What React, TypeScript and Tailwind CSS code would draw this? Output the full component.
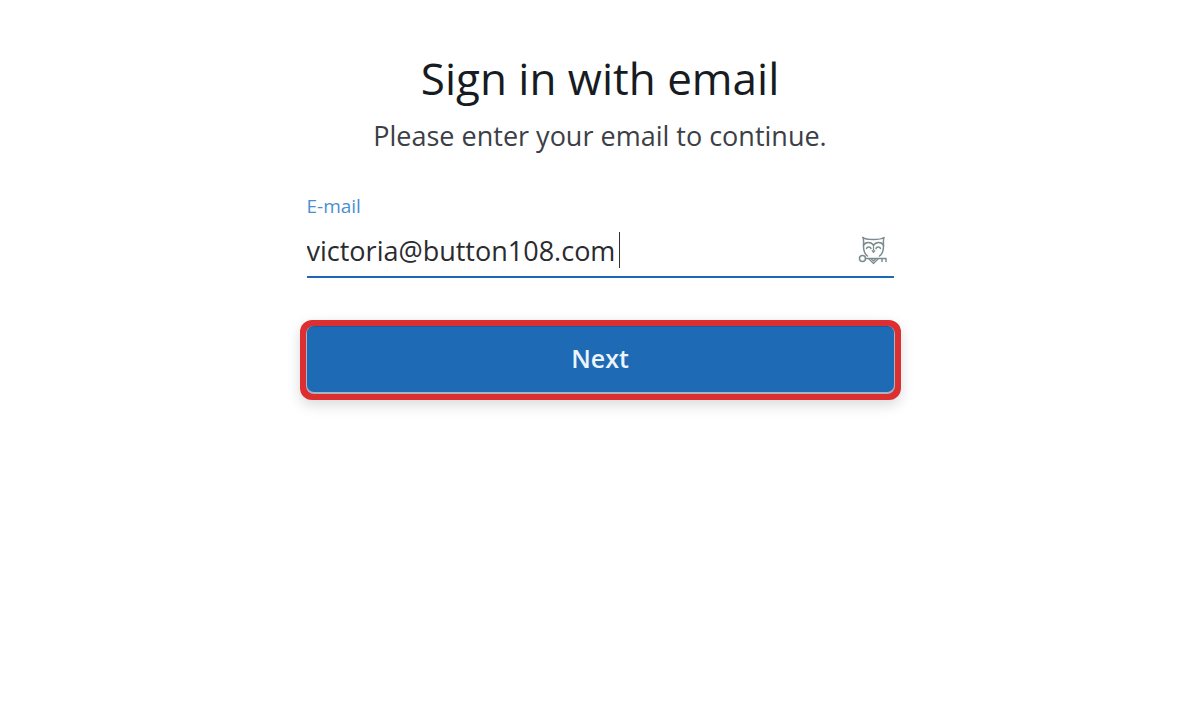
import { useState } from "react";

function OwlKeyIcon() {
  return (
    <svg
      viewBox="0 0 30 30"
      className="size-[30px]"
      fill="none"
      stroke="#7b8b90"
      strokeWidth="1.5"
      strokeLinecap="round"
      strokeLinejoin="round"
      aria-hidden="true"
    >
      <path d="M5 2.500C7 4.500 10 4.500 15.500 4.500C20 4.500 23 4.500 26 2.500C25 5 25.500 7 25.500 11C25.500 16 24.500 19 21.500 21" />
      <path d="M5 2.500C6 5 5.500 7 5.500 11C5.500 16 6.500 19 9.500 21" />
      <path d="M5.500 10.500C7 6.500 13.500 6.500 15.500 10.500C17.500 6.500 24 6.500 25.500 10.500" />
      <path d="M8.500 13.500C9 11.500 12.500 11.500 13 13.500M18 13.500C18.500 11.500 22 11.500 22.500 13.500" />
      <path d="M15.500 10.500V15M14.200 15.500L15.500 17.500L16.800 15.500" strokeWidth="1.200" />
      <circle cx="4.500" cy="23.500" r="3" />
      <path d="M7.500 23.500H28V26.500M24 23.500V26.500" />
      <path d="M11 24L15.500 28.500L20 24M13.500 24L15.500 26L17.500 24" strokeWidth="1.200" />
    </svg>
  );
}

export default function App() {
  const [email, setEmail] = useState("victoria@button108.com");

  return (
    <main className="min-h-screen bg-white px-4 pt-14 font-['Open_Sans',sans-serif]">
      <form className="mx-auto w-full max-w-[601px]" onSubmit={(e) => e.preventDefault()}>
        <h1 className="text-center text-[44px] leading-11 text-[#171b22]">
          Sign in with email
        </h1>
        <p className="mt-5 text-center text-[27px] leading-8 text-[#3c4046]">
          Please enter your email to continue.
        </p>
        <div className="mx-[7px] mt-11 border-b-2 border-[#1d67b7] pb-2">
          <label htmlFor="email" className="block text-[19px] leading-5 text-[#4a8fd2]">
            E-mail
          </label>
          <div className="mt-4 flex items-center justify-between pr-1.5">
            <input
              id="email"
              type="email"
              value={email}
              onChange={(e) => setEmail(e.target.value)}
              className="h-9 max-w-[90%] field-sizing-content border-r border-[#333333] bg-transparent pt-0.5 pr-1 text-[27px] text-[#2a2b2e] outline-none"
            />
            <OwlKeyIcon />
          </div>
        </div>
        <div className="mt-[42px] rounded-xl bg-[#dc2f31] p-1.5 shadow-[0_5px_14px_rgba(0,0,0,0.15)]">
          <button
            type="submit"
            className="flex h-17 w-full justify-center rounded-lg bg-[#aab3c0] px-px pb-0.5"
          >
            <span className="flex h-full w-full items-center justify-center rounded-[7px] border-t border-[#185ca3] bg-[#1e6ab5] pb-1 text-[25px] leading-8 font-semibold text-[#edf4fb]">
              Next
            </span>
          </button>
        </div>
      </form>
    </main>
  );
}
